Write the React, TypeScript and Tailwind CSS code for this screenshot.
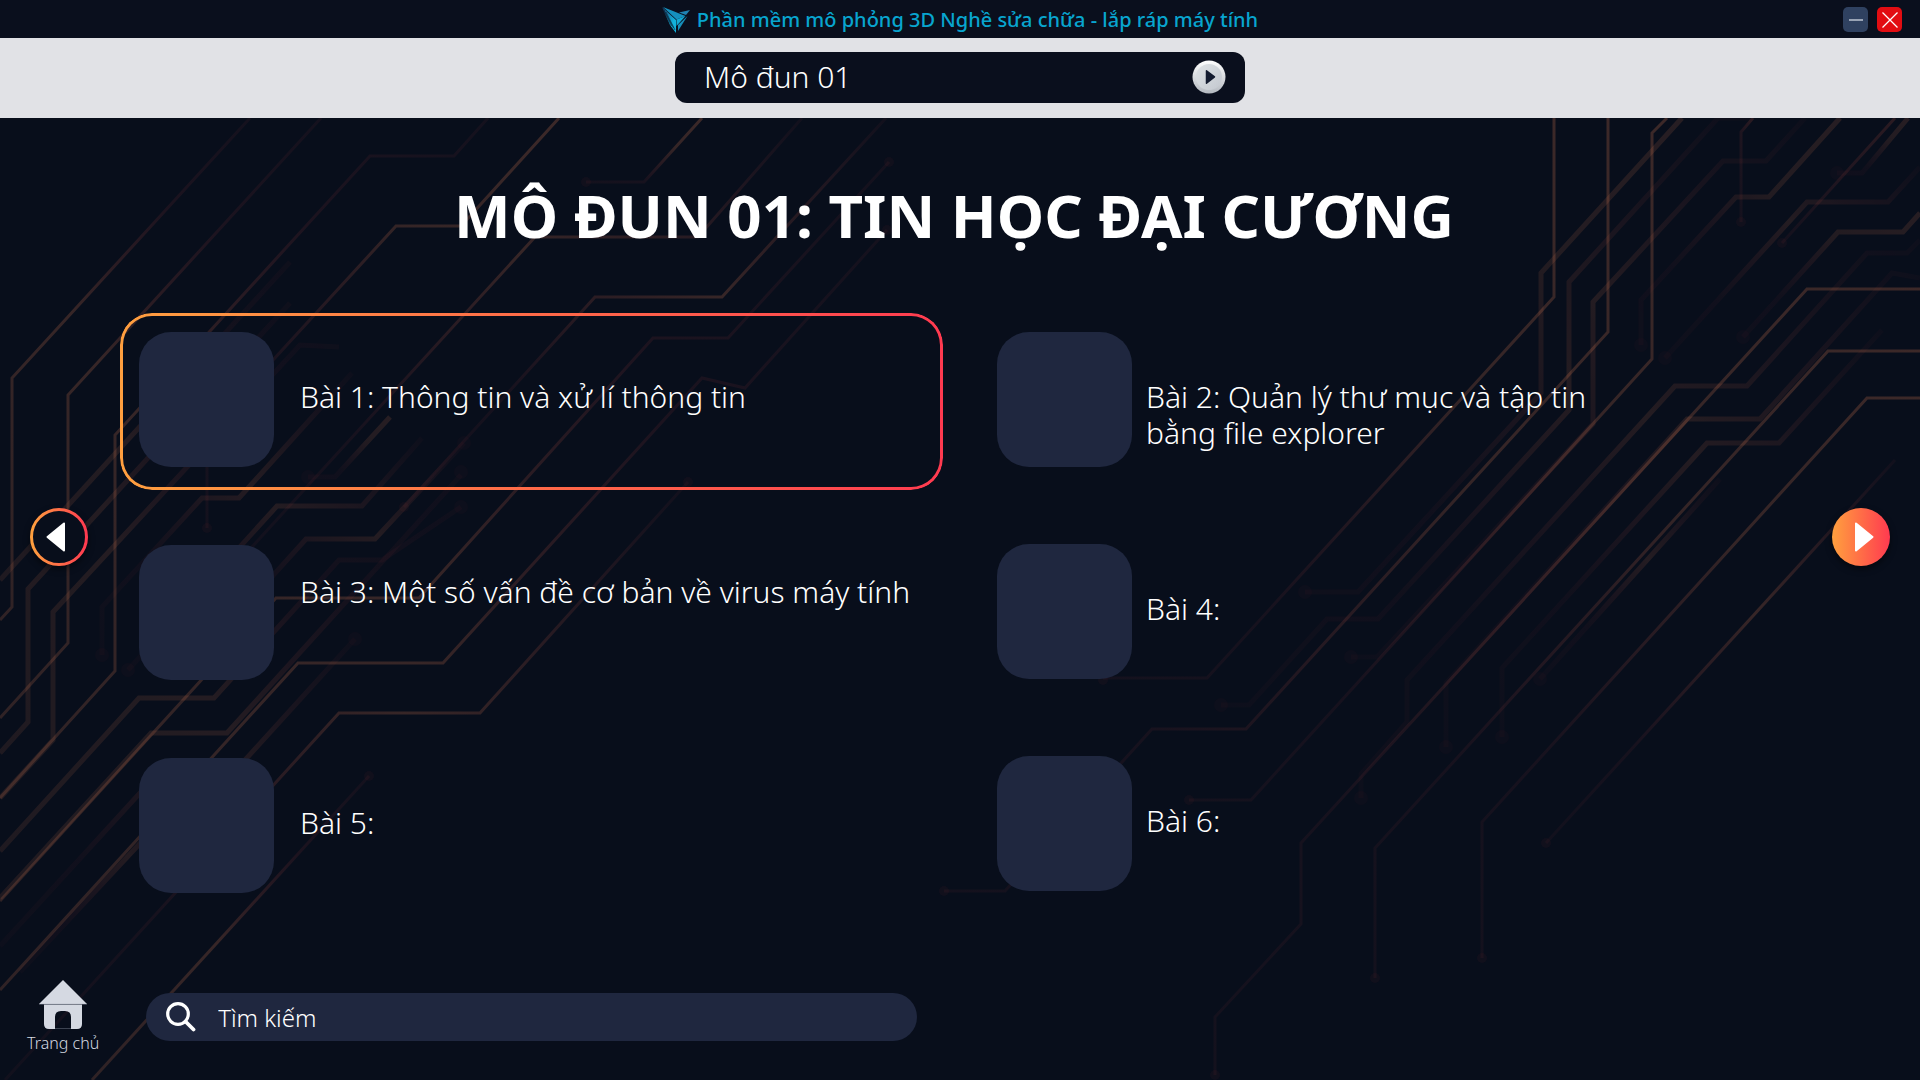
import React from 'react';

type Trace = {
  points: string;
  fade: 'ne' | 'sw' | 'mid' | 'low';
  dot?: [number, number];
};

const thinTraces: Trace[] = [
  { points: '250,118 12,378 12,607 0,620', fade: 'sw' },
  { points: '321,118 68,395 68,643 0,718', fade: 'sw' },
  { points: '488,118 454,156 370,156 115,435 115,671 0,798', fade: 'sw' },
  { points: '559,118 461,226 396,226 207,432 207,528', fade: 'ne', dot: [207, 528] },
  { points: '802,118 698,237 535,237 240,560', fade: 'mid' },
  { points: '702,118 644,182 586,182', fade: 'ne', dot: [586, 182] },
  { points: '886,118 722,297 595,297 404,507', fade: 'mid', dot: [404, 507] },
  { points: '889,162 728,338 653,338 419,598 276,598 0,901', fade: 'sw', dot: [889, 162] },
  { points: '887,230 745,388 702,378 443,663 298,663 0,990', fade: 'sw', dot: [887, 230] },
  { points: '688,482 480,713 339,713 5,1080', fade: 'mid', dot: [688, 482] },
  { points: '369,776 92,1080', fade: 'sw', dot: [369, 776] },
  { points: '1554,118 1554,297 1207,678 1103,678', fade: 'ne', dot: [1103, 680] },
  { points: '1608,118 1608,332 1246,729 1152,729 1005,891 944,891', fade: 'ne', dot: [944, 891] },
  { points: '1667,118 1652,133 1652,359 1251,800 1189,800', fade: 'ne', dot: [1189, 800] },
  { points: '1920,289 1807,289 1301,843 1301,924 1215,1017 1215,1075', fade: 'ne', dot: [1215, 1075] },
  { points: '1920,351 1828,351 1375,848 1375,978', fade: 'ne', dot: [1375, 978] },
  { points: '1920,398 1867,398 1482,822 1482,958', fade: 'ne', dot: [1482, 958] },
  { points: '1895,460 1546,843', fade: 'mid', dot: [1546, 843] },
  { points: '1895,118 1782,243', fade: 'low', dot: [1782, 243] },
  { points: '1753,118 1741,132 1741,222', fade: 'low', dot: [1741, 222] },
];

const wideTraces: Trace[] = [
  { points: '290,262 0,580', fade: 'sw' },
  { points: '290,303 28,589 28,722 0,753', fade: 'sw' },
  { points: '339,347 300,345 53,612 53,740 0,798', fade: 'sw' },
  { points: '352,373 239,498 202,498 102,607 102,655', fade: 'mid', dot: [102, 655] },
  { points: '422,438 362,506 277,506 128,670', fade: 'mid', dot: [128, 670] },
  { points: '390,417 335,477 308,477', fade: 'ne', dot: [308, 477] },
  { points: '464,443 375,539 306,539 210,645', fade: 'mid', dot: [464, 443] },
  { points: '461,507 382,560 339,560 214,698 139,698 0,851', fade: 'sw', dot: [461, 507] },
  { points: '461,475 227,733 151,733 0,898', fade: 'sw', dot: [461, 472] },
  { points: '355,639 225,782 150,782 0,946', fade: 'mid', dot: [355, 639] },
  { points: '200,779 20,972', fade: 'mid' },
  { points: '1682,118 1541,273 1541,393 1358,592 1305,592', fade: 'ne', dot: [1305, 592] },
  { points: '1750,118 1718,118 1569,282 1569,410 1378,619 1327,619 1249,705 1221,705', fade: 'mid', dot: [1221, 705] },
  { points: '1805,118 1766,161 1723,161 1593,302 1593,424 1377,657 1351,657', fade: 'mid', dot: [1351, 657] },
  { points: '1840,118 1769,197 1736,197 1641,300 1641,345', fade: 'ne', dot: [1641, 345] },
  { points: '1920,167 1888,202 1807,202 1665,358', fade: 'mid', dot: [1665, 358] },
  { points: '1920,213 1903,232 1838,232 1743,337', fade: 'ne', dot: [1743, 337] },
  { points: '1920,240 1907,253 1867,253 1747,386 1675,386 1407,680 1407,722 1361,774 1361,798', fade: 'mid', dot: [1361, 798] },
  { points: '1920,278 1892,273 1760,419 1687,419 1446,683 1446,747', fade: 'mid', dot: [1446, 747] },
  { points: '1882,330 1779,443 1707,443 1502,668 1502,737', fade: 'mid', dot: [1502, 737] },
  { points: '1720,479 1540,679', fade: 'mid', dot: [1540, 679] },
  { points: '1908,118 1862,173 1837,173', fade: 'ne', dot: [1837, 173] },
];

const fadeStroke = {
  ne: 'url(#fade-ne)',
  sw: 'url(#fade-sw)',
  mid: 'url(#fade-mid)',
  low: 'url(#fade-low)',
};

function CircuitBackground() {
  return (
    <svg
      aria-hidden="true"
      viewBox="0 0 1920 1080"
      preserveAspectRatio="xMidYMid slice"
      className="pointer-events-none absolute inset-0 h-full w-full"
      fill="none"
    >
      <defs>
        <linearGradient id="fade-ne" x1="1" y1="0" x2="0" y2="1">
          <stop offset="0" stopColor="#ff8c5a" stopOpacity="0.21" />
          <stop offset="0.35" stopColor="#ff8c5a" stopOpacity="0.18" />
          <stop offset="0.75" stopColor="#ff4d4d" stopOpacity="0.06" />
          <stop offset="1" stopColor="#ff4d4d" stopOpacity="0.05" />
        </linearGradient>
        <linearGradient id="fade-sw" x1="0" y1="1" x2="1" y2="0">
          <stop offset="0" stopColor="#ff8c5a" stopOpacity="0.16" />
          <stop offset="0.45" stopColor="#ff8c5a" stopOpacity="0.19" />
          <stop offset="0.75" stopColor="#ff4d4d" stopOpacity="0.08" />
          <stop offset="1" stopColor="#ff4d4d" stopOpacity="0.05" />
        </linearGradient>
        <linearGradient id="fade-mid" x1="0" y1="1" x2="1" y2="0">
          <stop offset="0" stopColor="#ff4d4d" stopOpacity="0.04" />
          <stop offset="0.25" stopColor="#ff4d4d" stopOpacity="0.06" />
          <stop offset="0.6" stopColor="#ff8c5a" stopOpacity="0.19" />
          <stop offset="1" stopColor="#ff4d4d" stopOpacity="0.04" />
        </linearGradient>
        <linearGradient id="fade-low" x1="1" y1="0" x2="0" y2="1">
          <stop offset="0" stopColor="#ff6a4d" stopOpacity="0.14" />
          <stop offset="1" stopColor="#ff4d4d" stopOpacity="0.05" />
        </linearGradient>
      </defs>
      <g strokeWidth="5" opacity="0.6">
        {wideTraces.map((t) => (
          <React.Fragment key={t.points}>
            <polyline points={t.points} stroke={fadeStroke[t.fade]} />
            {t.dot && <circle cx={t.dot[0]} cy={t.dot[1]} r="7" fill="#ff4d4d" fillOpacity="0.04" />}
          </React.Fragment>
        ))}
      </g>
      <g strokeWidth="3">
        {thinTraces.map((t) => (
          <React.Fragment key={t.points}>
            <polyline points={t.points} stroke={fadeStroke[t.fade]} />
            {t.dot && <circle cx={t.dot[0]} cy={t.dot[1]} r="5" fill="#ff4d4d" fillOpacity="0.04" />}
          </React.Fragment>
        ))}
      </g>
    </svg>
  );
}

function Logo() {
  return (
    <svg aria-hidden="true" viewBox="0 0 28 26" className="w-7 shrink-0">
      <defs>
        <linearGradient id="logo-wing" x1="0" y1="0" x2="1" y2="1">
          <stop offset="0" stopColor="#1b4a7c" />
          <stop offset="0.7" stopColor="#12b3dc" />
        </linearGradient>
      </defs>
      <path d="M0 0 14 13V26L8 18Z" fill="url(#logo-wing)" />
      <path d="M0 0 9.500 19M2 3 11.500 21M4 5 13 23" stroke="#0a1120" strokeWidth="0.600" />
      <path d="M1 0 23.500 9 14.500 12.500Z" fill="#1590bd" />
      <path d="M23.500 9 14.500 12.500V19Z" fill="#12a9d4" />
      <path d="M17 5.500 28 3 24 8Z" fill="#1f82b1" />
      <path d="M25.500 9 16 18V24Z" fill="#168db8" />
    </svg>
  );
}

function WindowBar() {
  return (
    <header className="relative flex h-[38px] items-center justify-center bg-[#0a0f1d]">
      <div className="flex items-center gap-[7px] pt-px">
        <Logo />
        <h1 className="text-xl font-medium text-[#08a5cf]">
          Phần mềm mô phỏng 3D Nghề sửa chữa - lắp ráp máy tính
        </h1>
      </div>
      <div className="absolute inset-y-0 right-[18px] flex items-center gap-[9px] pt-px">
        <button type="button" aria-label="Thu nhỏ" className="flex h-[25px] w-[25px] items-center justify-center rounded-[5px] bg-[#2f4160]">
          <svg aria-hidden="true" viewBox="0 0 14 14" className="w-3.5" stroke="#dfe5ee" strokeWidth="1.200">
            <path d="M0 7H14" />
          </svg>
        </button>
        <button type="button" aria-label="Đóng" className="flex h-[25px] w-[25px] items-center justify-center rounded-[5px] bg-[#e20d12]">
          <svg aria-hidden="true" viewBox="0 0 16 16" className="w-4" stroke="#ffffff" strokeWidth="1.300">
            <path d="M0.500 0.500 15.500 15.500M15.500 0.500 0.500 15.500" />
          </svg>
        </button>
      </div>
    </header>
  );
}

function ModulePicker() {
  return (
    <div className="relative flex h-20 items-center justify-center bg-[#e1e2e6] pb-0.5">
      <button
        type="button"
        className="flex h-[51px] w-[570px] items-center justify-between rounded-xl bg-[#0a0f1d] pr-[19px] pl-[29px] text-3xl font-light text-white"
      >
        <span>Mô đun 01</span>
        <svg aria-hidden="true" viewBox="0 0 34 34" className="w-[34px]">
          <defs>
            <linearGradient id="disc-rim" x1="0" y1="0" x2="0" y2="1">
              <stop offset="0" stopColor="#ffffff" />
              <stop offset="1" stopColor="#b4b9c0" />
            </linearGradient>
            <linearGradient id="disc-face" x1="0" y1="0" x2="1" y2="1">
              <stop offset="0" stopColor="#dfe3e6" />
              <stop offset="1" stopColor="#c3c8cf" />
            </linearGradient>
          </defs>
          <circle cx="17" cy="17" r="16.500" fill="url(#disc-rim)" />
          <circle cx="17" cy="17" r="13" fill="url(#disc-face)" />
          <path d="M14.500 10.800 22.500 16.900 14.500 23.200Z" fill="#141c30" stroke="#141c30" strokeWidth="1.500" strokeLinejoin="round" />
        </svg>
      </button>
    </div>
  );
}

type Lesson = { id: number; label: string; tall?: boolean; active?: boolean };

const leftLessons: Lesson[] = [
  { id: 1, label: 'Bài 1: Thông tin và xử lí thông tin', active: true },
  { id: 3, label: 'Bài 3: Một số vấn đề cơ bản về virus máy tính', tall: true },
  { id: 5, label: 'Bài 5:' },
];

const rightLessons: Lesson[] = [
  { id: 2, label: 'Bài 2: Quản lý thư mục và tập tin bằng file explorer' },
  { id: 4, label: 'Bài 4:' },
  { id: 6, label: 'Bài 6:' },
];

function LessonCard({ lesson, side }: { lesson: Lesson; side: 'left' | 'right' }) {
  return (
    <button
      type="button"
      className={`relative flex h-[177px] w-full items-center rounded-[32px] pb-1 text-left ${side === 'left' ? 'gap-[26px] pl-[19px]' : 'gap-3.5 pl-5'}`}
    >
      {lesson.active && (
        <span className="absolute inset-0 rounded-[32px] bg-linear-to-r from-[#ff9f3f] via-[#ff6a48] to-[#ff3a50] p-[3px] [mask:linear-gradient(#000_0_0)_content-box_exclude,linear-gradient(#000_0_0)]" />
      )}
      <span className="h-[135px] w-[135px] shrink-0 rounded-[32px] bg-[#1f273f]" />
      <span className={`text-3xl leading-9 font-light text-white ${lesson.tall ? 'h-[78px]' : 'h-[42px]'} ${side === 'left' ? '' : 'max-w-[480px]'}`}>
        {lesson.label}
      </span>
    </button>
  );
}

function LessonGrid() {
  return (
    <section className="flex items-start gap-8 px-[30px]">
      <button type="button" aria-label="Trang trước" className="mt-[195px] shrink-0 rounded-full shadow-[0_3px_6px_rgba(0,0,0,0.5)]">
        <svg aria-hidden="true" viewBox="0 0 58 58" className="w-[58px]">
          <defs>
            <linearGradient id="ring">
              <stop offset="0" stopColor="#ffa03e" />
              <stop offset="1" stopColor="#ff3a50" />
            </linearGradient>
          </defs>
          <circle cx="29" cy="29" r="27.500" fill="#080e1b" stroke="url(#ring)" strokeWidth="3" />
          <path d="M34 15.500V42.500L17.500 29Z" fill="#fff" stroke="#fff" strokeWidth="2" strokeLinejoin="round" />
        </svg>
      </button>
      <div className="grid flex-1 grid-cols-2 gap-x-[34px]">
        <div className="flex flex-col gap-9">
          {leftLessons.map((l) => (
            <LessonCard key={l.id} lesson={l} side="left" />
          ))}
        </div>
        <div className="flex flex-col gap-[35px]">
          {rightLessons.map((l) => (
            <LessonCard key={l.id} lesson={l} side="right" />
          ))}
        </div>
      </div>
      <button type="button" aria-label="Trang sau" className="mt-[195px] shrink-0 rounded-full shadow-[0_3px_6px_rgba(0,0,0,0.5)]">
        <svg aria-hidden="true" viewBox="0 0 58 58" className="w-[58px]">
          <circle cx="29" cy="29" r="29" fill="url(#ring)" />
          <path d="M24 15.500V42.500L40.500 29Z" fill="#fff" stroke="#fff" strokeWidth="2" strokeLinejoin="round" />
        </svg>
      </button>
    </section>
  );
}

function BottomBar() {
  return (
    <footer className="mt-auto flex items-start gap-[47px] pt-8 pb-[25px] pl-[27px]">
      <a href="#home" className="flex flex-col items-center gap-0.5 text-[#d5d9e2]">
        <svg aria-hidden="true" viewBox="0 0 48 49" className="w-12" fill="#d5d9e2">
          <path d="M24 0 48 24H0Z" />
          <path d="M5 24.500H43V44Q43 49 38 49H32V37Q32 31 26 31H22Q16 31 16 37V49H10Q5 49 5 44Z" />
          <path d="M0 24.250H48M16 48.700H32" stroke="#8b93a3" strokeWidth="0.500" />
        </svg>
        <span className="text-base leading-6 font-light">Trang chủ</span>
      </a>
      <label className="mt-[13px] flex h-12 w-[771px] items-center rounded-full bg-[#1f273f] pl-5">
        <span className="hidden">Tìm kiếm</span>
        <svg aria-hidden="true" viewBox="0 0 30 30" className="w-[30px]" fill="none" stroke="#fff">
          <circle cx="12" cy="12" r="10.300" strokeWidth="3.200" />
          <path d="M19.500 19.500 27.500 27.500" strokeWidth="3.800" strokeLinecap="round" />
        </svg>
        <input
          type="text"
          aria-label="Tìm kiếm"
          placeholder="Tìm kiếm"
          className="ml-[22px] h-full flex-1 bg-transparent text-2xl font-light text-white outline-none placeholder:text-white"
        />
      </label>
    </footer>
  );
}

export default function App() {
  return (
    <div className="relative flex min-h-screen flex-col overflow-hidden bg-[#080e1b] font-['Noto_Sans',sans-serif] text-white">
      <CircuitBackground />
      <WindowBar />
      <ModulePicker />
      <main className="relative flex flex-1 flex-col">
        <h2 className="mt-[57px] pr-3 text-center text-6xl leading-20 font-bold">
          MÔ ĐUN 01: TIN HỌC ĐẠI CƯƠNG
        </h2>
        <div className="mt-[58px]">
          <LessonGrid />
        </div>
        <BottomBar />
      </main>
    </div>
  );
}
